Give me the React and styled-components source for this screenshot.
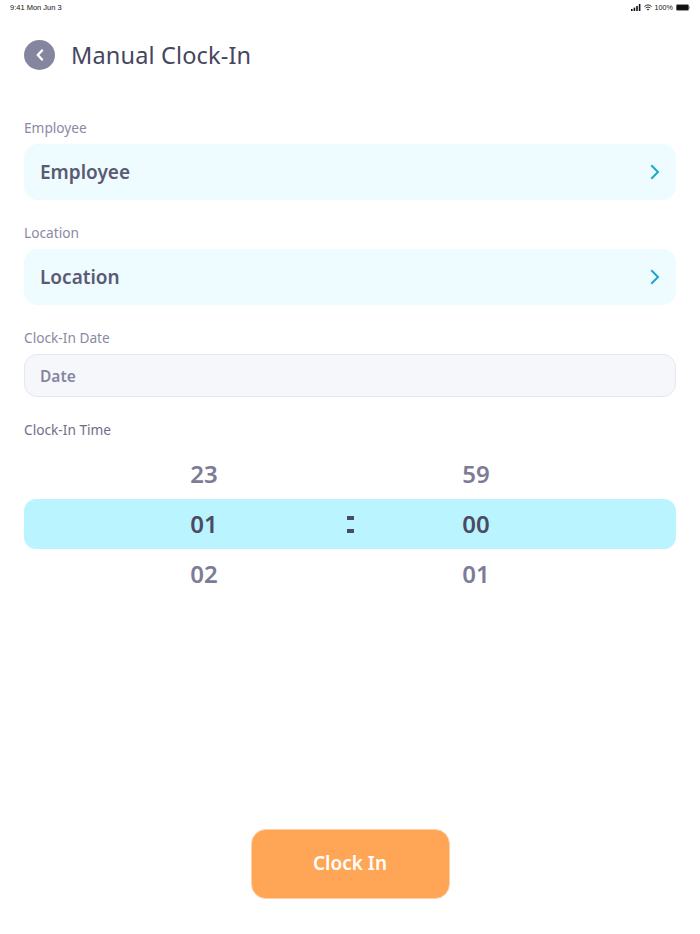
import React from "react";
import styled, { createGlobalStyle } from "styled-components";

const Global = createGlobalStyle`
  html, body { margin: 0; padding: 0; background: #fff; }
  #root { width: 700px; height: 934px; }
`;
const FONT = `"Noto Sans", "Open Sans", sans-serif`;

const Page = styled.div`
  width: 700px; height: 934px; display: flex; flex-direction: column;
  background: #fff; font-family: ${FONT}; overflow: hidden;
`;
const StatusBar = styled.div`
  height: 14px; padding: 0 10px; display: flex; align-items: center; justify-content: space-between;
  font-family: "Liberation Sans", sans-serif; font-size: 7.5px; color: #111;
`;
const StatusRight = styled.div`display: flex; align-items: center; gap: 3px; font-size: 7.2px;`;
const Header = styled.header`
  margin-top: 26px; padding: 0 24px; height: 30px; display: flex; align-items: center; gap: 16px;
`;
const BackButton = styled.button`
  width: 31px; height: 30px; padding: 0; border: 0; border-radius: 50%; background: #85859f;
  display: flex; align-items: center; justify-content: center;
`;
const Title = styled.h1`
  margin: 0; font-size: 23.5px; font-weight: 400; color: #46465f; letter-spacing: 0.15px; line-height: 30px;
`;
const Form = styled.main`
  margin-top: 50px; padding: 0 24px; display: flex; flex-direction: column;
`;
const Label = styled.label`
  height: 16px; line-height: 16px; font-size: 13.7px; color: ${p => p.$dark ? "#6f6f88" : "#8a8aa3"};
  margin-bottom: ${p => p.$gap || 8}px;
`;
const SelectField = styled.div`
  height: 56px; padding: 0 16px; margin-bottom: 25px; border-radius: 14px; background: #eefbff;
  display: flex; align-items: center; justify-content: space-between;
  font-size: 19px; font-weight: 600; color: #5a5a74;
`;
const DateField = styled.div`
  height: 41px; padding: 0 15px; margin-bottom: 25px; border: 1px solid #e6e6f2; border-radius: 13px;
  background: #f6f7fb; display: flex; align-items: center;
  font-size: 15.5px; font-weight: 600; color: #85859f;
`;
const Picker = styled.div`
  margin-top: 3px; display: flex; flex-direction: column;
`;
const PickerRow = styled.div`
  height: 50px; border-radius: 12px; display: grid; grid-template-columns: 360px 0 1fr;
  align-items: center; background: ${p => p.$active ? "#baf4ff" : "transparent"};
  font-size: 24px; font-weight: 600; color: ${p => p.$active ? "#4b4b63" : "#7c7c96"};
`;
const Cell = styled.span`
  text-align: center; line-height: 50px;
  &:first-child { width: 360px; }
  &:last-child { width: 184px; justify-self: start; }
`;
const Colon = styled.span`
  position: relative; width: 7px; height: 17px; left: -37px;
  display: flex; flex-direction: column; justify-content: space-between;
  &::before, &::after { content: ""; display: block; height: 4px; background: #4b4b63; }
`;
const Footer = styled.div`
  margin-top: 230px; display: flex; justify-content: center;
`;
const ClockIn = styled.button`
  width: 199px; height: 70px; padding: 0 0 2px; border: 1px solid #ffd0a3; border-radius: 15px; background: #ffa556;
  color: #fff; font-family: ${FONT}; font-size: 19px; font-weight: 600;
`;

const Chevron = () => (
  <svg width="10" height="16" viewBox="0 0 10 16" fill="none" stroke="#1ba6cc" strokeWidth="2" strokeLinecap="square">
    <path d="M2 2l6 6-6 6" />
  </svg>
);

export default function App() {
  return (
    <Page>
      <Global />
      <StatusBar>
        <span>9:41 Mon Jun 3</span>
        <StatusRight>
          <svg width="10" height="7" viewBox="0 0 10 7" fill="#111"><rect x="0" y="5" width="1.6" height="2"/><rect x="2.6" y="3.6" width="1.6" height="3.4"/><rect x="5.2" y="2" width="1.6" height="5"/><rect x="7.8" y="0" width="1.6" height="7"/></svg>
          <svg width="8" height="7" viewBox="0 0 9 7" fill="none" stroke="#111" strokeWidth="1"><path d="M.5 2.4a6 6 0 0 1 8 0M1.9 4a4 4 0 0 1 5.2 0"/><path d="M4.5 7 3.2 5.4a2 2 0 0 1 2.6 0z" fill="#111" stroke="none"/></svg>
          <span>100%</span>
          <svg width="14" height="7" viewBox="0 0 15.6 7"><rect x=".25" y=".25" width="14" height="6.5" rx="1.4" fill="#111" stroke="#aaa" strokeWidth=".5"/><rect x="14.6" y="2.3" width="1" height="2.4" fill="#999"/></svg>
        </StatusRight>
      </StatusBar>
      <Header>
        <BackButton aria-label="Back">
          <svg width="10" height="12" viewBox="0 0 10 12" fill="none" stroke="#fff" strokeWidth="2.4" strokeLinecap="round" strokeLinejoin="round"><path d="M7 1.5 2.8 6 7 10.5"/></svg>
        </BackButton>
        <Title>Manual Clock-In</Title>
      </Header>
      <Form>
        <Label>Employee</Label>
        <SelectField>Employee<Chevron /></SelectField>
        <Label>Location</Label>
        <SelectField>Location<Chevron /></SelectField>
        <Label>Clock-In Date</Label>
        <DateField>Date</DateField>
        <Label $dark $gap={0}>Clock-In Time</Label>
        <Picker>
          <PickerRow><Cell>23</Cell><span /><Cell>59</Cell></PickerRow>
          <PickerRow $active><Cell>01</Cell><Colon /><Cell>00</Cell></PickerRow>
          <PickerRow><Cell>02</Cell><span /><Cell>01</Cell></PickerRow>
        </Picker>
      </Form>
      <Footer><ClockIn>Clock In</ClockIn></Footer>
    </Page>
  );
}
